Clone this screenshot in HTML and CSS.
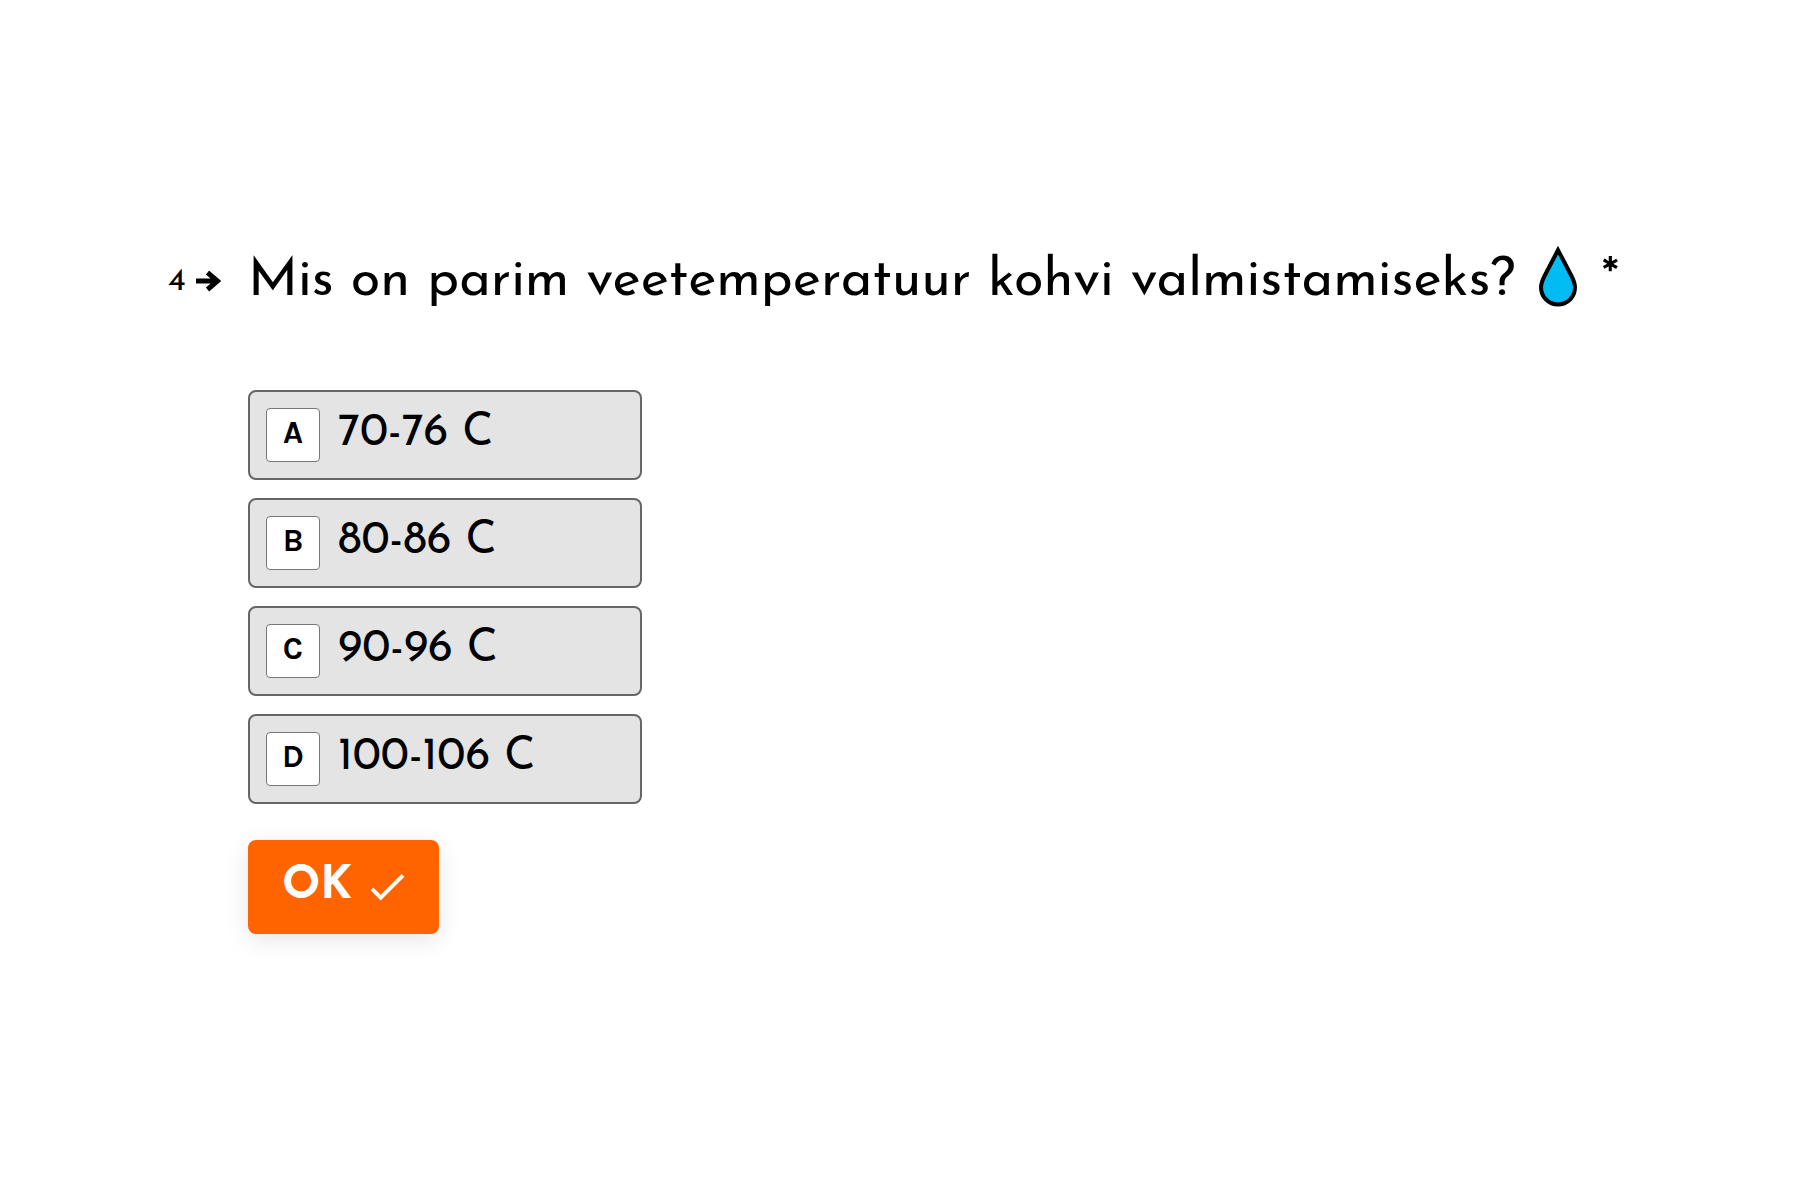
FILE: index.html
```html
<!DOCTYPE html>
<html lang="et">
<head>
<meta charset="utf-8">
<meta name="viewport" content="width=device-width, initial-scale=1">
<title>Kohvi viktoriin</title>
<link rel="stylesheet" href="styles.css">
</head>
<body>
<main class="page">
  <form class="question">
    <div class="counter">
      <span>4</span>
      <svg class="arrow" viewBox="0 0 25 22" aria-hidden="true"><path d="M0 10H21M11.500 1.500L21.500 10L11.500 18.500" fill="none" stroke="#000" stroke-width="5"/></svg>
    </div>
    <h1 class="title" id="title">
      <span>Mis on parim veetemperatuur kohvi valmistamiseks?</span>
      <svg class="drop" viewBox="0 0 38 62" aria-hidden="true"><path d="M19 5L5.500 31C3 36 2 39 2 42.500A17 17 0 0 0 36 42.500C36 39 35 36 32.500 31Z" fill="#00bcf2" stroke="#000" stroke-width="4" stroke-miterlimit="10"/></svg>
      <span>*</span>
    </h1>
    <div class="answers">
      <div class="choices" role="radiogroup" aria-labelledby="title">
        <label class="choice"><input class="radio" type="radio" name="temp" value="a"><span class="key">A</span><span class="text">70-76 C</span></label>
        <label class="choice"><input class="radio" type="radio" name="temp" value="b"><span class="key">B</span><span class="text">80-86 C</span></label>
        <label class="choice"><input class="radio" type="radio" name="temp" value="c"><span class="key">C</span><span class="text">90-96 C</span></label>
        <label class="choice"><input class="radio" type="radio" name="temp" value="d"><span class="key">D</span><span class="text">100-106 C</span></label>
      </div>
      <button class="ok" type="button"><span>OK</span><svg class="check" viewBox="0 0 36 28" aria-hidden="true"><path d="M2 16L11 25L34 2" fill="none" stroke="#fff" stroke-width="4"/></svg></button>
    </div>
  </form>
</main>
</body>
</html>
```
FILE: styles.css
```css
* {
  box-sizing: border-box;
}

body {
  margin: 0;
  background: #fff;
  color: #000;
  font-family: "Josefin Sans", Lato, sans-serif;
}

.page {
  padding: 240px 168px;
}

.question {
  display: grid;
  grid-template-columns: 52px 1fr;
  column-gap: 28px;
  row-gap: 66px;
}

.counter {
  display: flex;
  align-items: center;
  gap: 10px;
  height: 84px;
  font-size: 33px;
  line-height: 40px;
}

.arrow {
  flex: none;
  width: 25px;
  height: 22px;
}

.title {
  display: flex;
  margin: 0;
  font-size: 54px;
  font-weight: 400;
  line-height: 84px;
  white-space: nowrap;
}

.drop {
  flex: none;
  width: 38px;
  height: 62px;
  margin: 5px 24px;
}

.answers {
  grid-column: 2;
  display: flex;
  flex-direction: column;
  align-items: flex-start;
  gap: 36px;
}

.choices {
  display: grid;
  gap: 18px;
  min-width: 394px;
}

.choice {
  position: relative;
  display: flex;
  gap: 18px;
  padding: 16px;
  border: 2px solid #666;
  border-radius: 8px;
  background: #e4e4e4;
  font-size: 45px;
  line-height: 52px;
  cursor: pointer;
}

.radio {
  position: absolute;
  inset: 0;
  width: 100%;
  height: 100%;
  margin: 0;
  opacity: 0;
}

.key {
  width: 54px;
  height: 54px;
  border: 1px solid #777;
  border-radius: 4px;
  background: #fff;
  font: bold 32px/48px Karla, Roboto, sans-serif;
  text-align: center;
}

.ok {
  display: flex;
  align-items: center;
  gap: 18px;
  padding: 20px 34px;
  border: 0;
  border-radius: 8px;
  background: #ff6400;
  box-shadow: 0 6px 24px rgba(0, 0, 0, 0.1);
  color: #fff;
  font: 700 45px/54px "Josefin Sans", Lato, sans-serif;
}

.check {
  width: 35px;
  height: 28px;
}
```
